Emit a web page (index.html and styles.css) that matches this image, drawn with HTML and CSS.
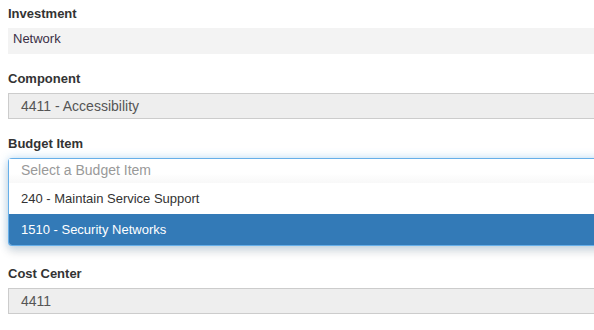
FILE: index.html
```html
<!DOCTYPE html>
<html>
<head>
<meta charset="utf-8">
<link rel="stylesheet" href="styles.css">
</head>
<body>
<div class="form">
  <div class="group">
    <label class="lbl">Investment</label>
    <div class="static">Network</div>
  </div>
  <div class="group">
    <label class="lbl">Component</label>
    <div class="readonly">4411 - Accessibility</div>
  </div>
  <div class="group group-select">
    <label class="lbl">Budget Item</label>
    <div class="select-wrap">
      <div class="select"><span class="placeholder">Select a Budget Item</span></div>
      <ul class="dropdown">
        <li class="opt">240 - Maintain Service Support</li>
        <li class="opt active">1510 - Security Networks</li>
      </ul>
    </div>
  </div>
  <div class="group">
    <label class="lbl">Cost Center</label>
    <div class="readonly">4411</div>
  </div>
</div>
</body>
</html>
```

FILE: styles.css
```css
html, body {
  margin: 0;
  padding: 0;
  overflow: hidden;
  background: #fff;
}
body {
  font-family: "Liberation Sans", Arial, sans-serif;
  color: #333;
}
.form {
  width: 640px;
  padding: 4px 0 0 8px;
  display: flex;
  flex-direction: column;
}
.group {
  display: flex;
  flex-direction: column;
  margin-bottom: 15px;
}
.group-select {
  margin-bottom: 18px;
}
.lbl {
  display: block;
  font-size: 13px;
  font-weight: bold;
  line-height: 20px;
  margin-bottom: 4px;
  color: #333;
}
.static {
  height: 26px;
  box-sizing: border-box;
  background: #f3f3f3;
  font-size: 13px;
  line-height: 16px;
  padding: 3px 5px;
  color: #3a2f45;
}
.readonly {
  height: 26px;
  box-sizing: border-box;
  background: #eee;
  border: 1px solid #ccc;
  border-right: none;
  font-size: 14px;
  line-height: 24px;
  padding: 0 12px;
  color: #555;
}
.select-wrap {
  position: relative;
  border: 1px solid #66afe9;
  border-right: none;
  border-radius: 4px 0 0 4px;
  box-shadow: 0 0 8px rgba(102, 175, 233, 0.45), 0 6px 10px rgba(0, 0, 0, 0.12);
  background: #fff;
}
.select {
  height: 24px;
  box-sizing: border-box;
  padding: 0 12px;
  font-size: 14px;
  line-height: 23px;
  background: linear-gradient(#fff 60%, #f8f8f8);
}
.placeholder {
  color: #999;
}
.dropdown {
  list-style: none;
  margin: 0;
  padding: 0;
}
.opt {
  height: 31px;
  line-height: 31px;
  padding: 0 12px;
  font-size: 13px;
  color: #333;
}
.opt.active {
  background: #337ab7;
  color: #fff;
  border-bottom-left-radius: 3px;
}
```
